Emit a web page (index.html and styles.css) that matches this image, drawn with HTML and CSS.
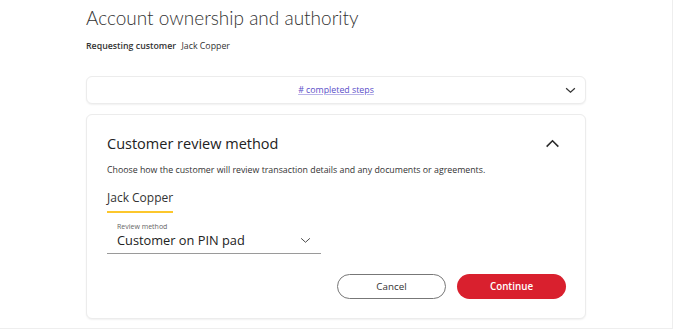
FILE: index.html
```html
<!DOCTYPE html>
<html lang="en">
<head>
  <meta charset="UTF-8" />
  <meta name="viewport" content="width=device-width, initial-scale=1.0" />
  <title>Account ownership and authority</title>
  <link rel="stylesheet" href="styles.css">
</head>
<body>
  <main class="page">
    <h1 class="title">Account ownership and authority</h1>
    <p class="requester"><strong>Requesting customer</strong> Jack Copper</p>

    <section class="card steps">
      <a href="#" class="steps-link"># completed steps</a>
      <svg class="chev-sm" viewBox="0 0 12 8" width="11" height="7"><path d="M1 1.5l5 4.5 5-4.5" fill="none" stroke="#333" stroke-width="1.4"/></svg>
    </section>

    <section class="card review">
      <div class="review-head">
        <h2>Customer review method</h2>
        <svg class="chev-lg" viewBox="0 0 16 10" width="15" height="9"><path d="M1.5 8.5l6.5-6.5 6.5 6.5" fill="none" stroke="#2b2b2b" stroke-width="1.8"/></svg>
      </div>
      <p class="desc">Choose how the customer will review transaction details and any documents or agreements.</p>
      <div class="tabs"><span class="tab active">Jack Copper</span></div>
      <label class="select">
        <span class="select-label">Review method</span>
        <span class="select-value">Customer on PIN pad
          <svg viewBox="0 0 12 8" width="11" height="7"><path d="M1 1.5l5 4.5 5-4.5" fill="none" stroke="#444" stroke-width="1.1"/></svg>
        </span>
      </label>
      <div class="actions">
        <button type="button" class="btn btn-cancel">Cancel</button>
        <button type="button" class="btn btn-continue">Continue</button>
      </div>
    </section>
  </main>
</body>
</html>
```
FILE: styles.css
```css
* { box-sizing: border-box; }
body {
  margin: 0;
  font-family: "Open Sans", "Liberation Sans", sans-serif;
  background-color: #fff;
  color: #222;
  border-right: 1px solid #eee;
  border-bottom: 1px solid #eee;
  height: 329px;
  overflow: hidden;
}
.page {
  width: 500px;
  margin-left: 86px;
  padding-top: 4px;
}
.title {
  margin: 0;
  font-family: Lato, "Open Sans", sans-serif;
  font-size: 19px;
  font-weight: 300;
  color: #333;
  line-height: 28px;
}
.requester {
  margin: 8px 0 0;
  font-size: 8.8px;
  color: #333;
}
.requester strong { font-weight: 600; margin-right: 3px; }
.card {
  background: #fff;
  border: 1px solid #ececec;
  border-radius: 6px;
  box-shadow: 0 1px 2px rgba(0,0,0,0.06);
}
.steps {
  margin-top: 24px;
  height: 28px;
  display: flex;
  align-items: center;
  justify-content: center;
  position: relative;
}
.steps-link {
  font-size: 8.8px;
  color: #5b4fc9;
  text-decoration: underline;
  text-decoration-color: #b9b3e8;
}
.chev-sm { position: absolute; right: 9px; top: 10px; }
.review {
  margin-top: 10px;
  padding: 19px 19px 19px 20px;
}
.review-head {
  display: flex;
  justify-content: space-between;
  align-items: center;
}
.review-head h2 {
  margin: 0;
  font-size: 14.5px;
  font-weight: 500;
  color: #222;
}
.chev-lg { margin-right: 6px; }
.desc {
  margin: 11px 0 0;
  font-size: 8.8px;
  color: #333;
}
.tabs { margin-top: 9px; }
.tab {
  display: inline-block;
  font-size: 12px;
  color: #333;
  padding-bottom: 5px;
  border-bottom: 2px solid #fcc72c;
}
.select {
  display: block;
  width: 214px;
  margin-top: 9px;
  border-bottom: 1px solid #9a9a9a;
  padding-left: 10px;
  padding-bottom: 4px;
}
.select-label {
  display: block;
  font-size: 7px;
  color: #666;
}
.select-value {
  display: flex;
  justify-content: space-between;
  align-items: center;
  font-size: 12.8px;
  color: #222;
  padding-right: 10px;
}
.actions {
  display: flex;
  justify-content: flex-end;
  gap: 11px;
  margin-top: 20px;
}
.btn {
  width: 109px;
  height: 25px;
  border-radius: 13px;
  font-family: inherit;
  font-size: 9.8px;
  cursor: pointer;
}
.btn-cancel {
  background: #fff;
  border: 1px solid #777;
  color: #333;
}
.btn-continue {
  background: #d9202e;
  border: none;
  color: #fff;
  font-weight: 600;
}
```
